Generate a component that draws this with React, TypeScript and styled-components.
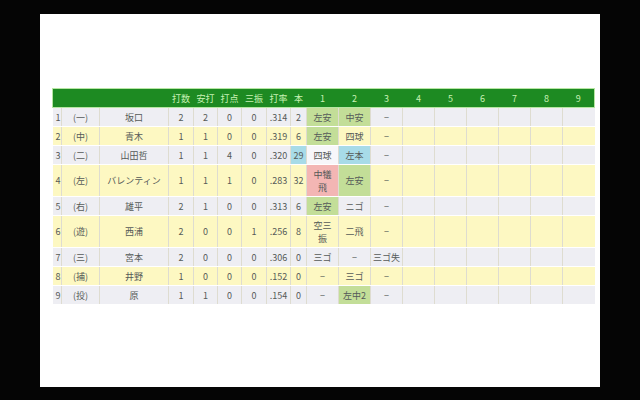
import styled, { createGlobalStyle } from "styled-components";

const GlobalStyle = createGlobalStyle`
  html, body {
    margin: 0;
    padding: 0;
    background: #050505;
  }
  body {
    font-family: "Noto Sans CJK JP", "Noto Sans", sans-serif;
  }
`;

type Tone = "green" | "pink" | "blue" | "white" | undefined;

interface Cell {
  text: string;
  tone?: Tone;
}

interface Batter {
  order: number;
  pos: string;
  name: string;
  stats: [number, number, number, number];
  avg: string;
  hr: Cell;
  innings: Cell[];
  tall?: boolean;
}

const batters: Batter[] = [
  { order: 1, pos: "(一)", name: "坂口", stats: [2, 2, 0, 0], avg: ".314", hr: { text: "2" },
    innings: [{ text: "左安", tone: "green" }, { text: "中安", tone: "green" }, { text: "−" }] },
  { order: 2, pos: "(中)", name: "青木", stats: [1, 1, 0, 0], avg: ".319", hr: { text: "6" },
    innings: [{ text: "左安", tone: "green" }, { text: "四球" }, { text: "−" }] },
  { order: 3, pos: "(二)", name: "山田哲", stats: [1, 1, 4, 0], avg: ".320", hr: { text: "29", tone: "blue" },
    innings: [{ text: "四球", tone: "white" }, { text: "左本", tone: "blue" }, { text: "−" }] },
  { order: 4, pos: "(左)", name: "バレンティン", stats: [1, 1, 1, 0], avg: ".283", hr: { text: "32" }, tall: true,
    innings: [{ text: "中犠\n飛", tone: "pink" }, { text: "左安", tone: "green" }, { text: "−" }] },
  { order: 5, pos: "(右)", name: "雄平", stats: [2, 1, 0, 0], avg: ".313", hr: { text: "6" },
    innings: [{ text: "左安", tone: "green" }, { text: "ニゴ" }, { text: "−" }] },
  { order: 6, pos: "(遊)", name: "西浦", stats: [2, 0, 0, 1], avg: ".256", hr: { text: "8" }, tall: true,
    innings: [{ text: "空三\n振" }, { text: "二飛" }, { text: "−" }] },
  { order: 7, pos: "(三)", name: "宮本", stats: [2, 0, 0, 0], avg: ".306", hr: { text: "0" },
    innings: [{ text: "三ゴ" }, { text: "−" }, { text: "三ゴ失" }] },
  { order: 8, pos: "(捕)", name: "井野", stats: [1, 0, 0, 0], avg: ".152", hr: { text: "0" },
    innings: [{ text: "−" }, { text: "三ゴ" }, { text: "−" }] },
  { order: 9, pos: "(投)", name: "原", stats: [1, 1, 0, 0], avg: ".154", hr: { text: "0" },
    innings: [{ text: "−" }, { text: "左中2", tone: "green" }, { text: "−" }] },
];

const widths = [9, 38, 69, 25, 24, 24, 25, 24, 16, 32, 32, 32, 32, 32, 32, 32, 32, 32];
const statHeads = ["打数", "安打", "打点", "三振", "打率", "本"];

const toneColors: Record<string, string> = {
  green: "#c3de98",
  pink: "#f3b6b4",
  blue: "#a7dbe8",
  white: "#f7f7fa",
};

export default function App() {
  return (
    <>
      <GlobalStyle />
      <Screen>
        <Panel>
          <Score>
            <colgroup>
              {widths.map((w, i) => (
                <col key={i} style={{ width: w }} />
              ))}
            </colgroup>
            <thead>
              <tr>
                <HeadCell />
                <HeadCell />
                <HeadCell />
                {statHeads.map((h) => (
                  <HeadCell key={h}>{h}</HeadCell>
                ))}
                {Array.from({ length: 9 }, (_, i) => (
                  <HeadCell key={i}>{i + 1}</HeadCell>
                ))}
              </tr>
            </thead>
            <tbody>
              {batters.map((b) => (
                <Row key={b.order} $even={b.order % 2 === 0} $tall={b.tall}>
                  <OrderCell>{b.order}</OrderCell>
                  <Td>{b.pos}</Td>
                  <Td>{b.name}</Td>
                  {b.stats.map((s, i) => (
                    <Td key={i}>{s}</Td>
                  ))}
                  <Td>{b.avg}</Td>
                  <Td $tone={b.hr.tone}>{b.hr.text}</Td>
                  {Array.from({ length: 9 }, (_, i) => {
                    const c = b.innings[i];
                    return (
                      <Td key={i} $tone={c?.tone}>
                        {c?.text}
                      </Td>
                    );
                  })}
                </Row>
              ))}
            </tbody>
          </Score>
        </Panel>
      </Screen>
    </>
  );
}

const Screen = styled.div`
  width: 640px;
  height: 400px;
  padding: 14px 40px 13px;
  box-sizing: border-box;
  background: #050505;
`;

const Panel = styled.div`
  width: 560px;
  height: 373px;
  background: #ffffff;
  padding: 74px 0 0 12px;
  box-sizing: border-box;
`;

const Score = styled.table`
  width: 542px;
  table-layout: fixed;
  border-collapse: collapse;
  font-size: 9px;
  color: #555a58;
`;

const HeadCell = styled.th`
  height: 18px;
  padding: 0;
  background: #1d8a22;
  border-top: 1px solid #b6e6a2;
  border-bottom: 1px solid #b6e6a2;
  color: #c8f2b4;
  font-weight: 400;
  text-align: center;
  white-space: nowrap;
  &:first-child {
    border-left: 1px solid #b6e6a2;
  }
  &:last-child {
    border-right: 1px solid #b6e6a2;
  }
`;

const Row = styled.tr<{ $even: boolean; $tall?: boolean }>`
  height: ${(p) => (p.$tall ? 32 : 19)}px;
  background: ${(p) => (p.$even ? "#fdf8c2" : "#eeeef3")};
`;

const Td = styled.td<{ $tone?: Tone }>`
  padding: 0;
  text-align: center;
  white-space: pre-line;
  line-height: 13px;
  border-right: 1px solid #dedcd0;
  border-bottom: 1px solid #ffffff;
  background: ${(p) => (p.$tone ? toneColors[p.$tone] : "transparent")};
  &:last-child {
    border-right: none;
  }
`;

const OrderCell = styled(Td)`
  text-align: left;
  padding-left: 3px;
`;
